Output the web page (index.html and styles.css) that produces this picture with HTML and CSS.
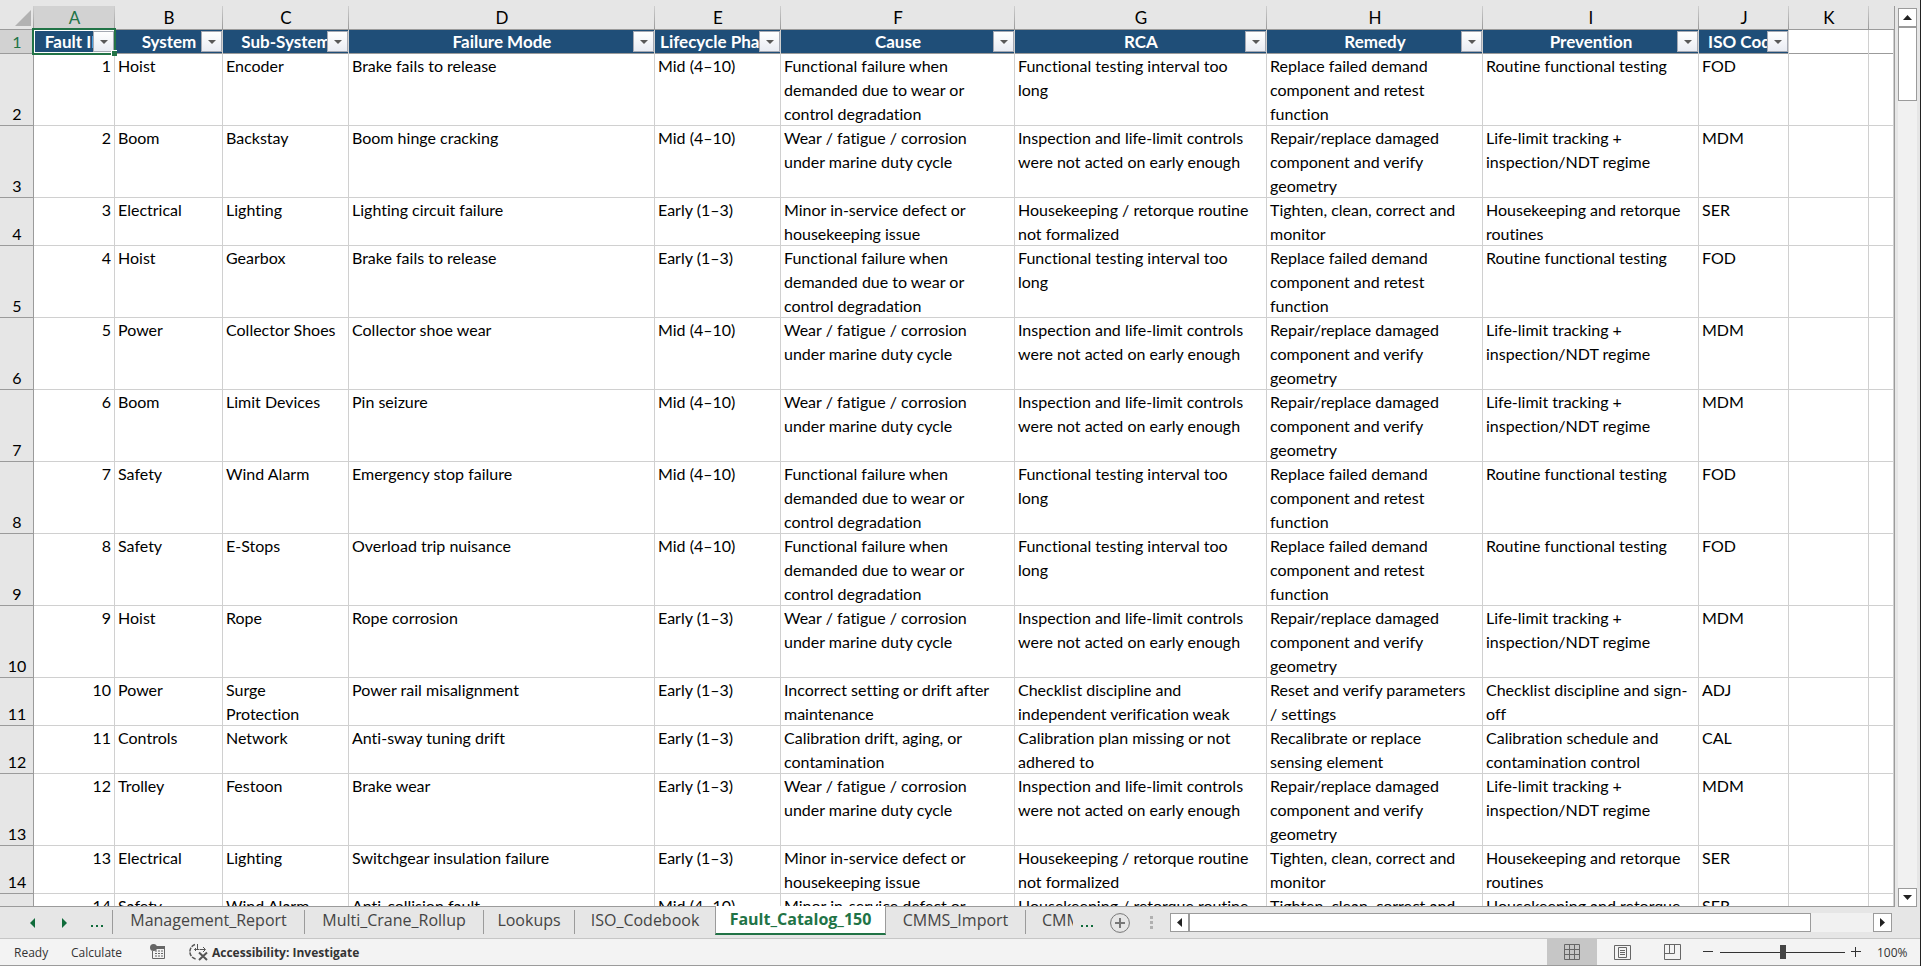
FILE: index.html
```html
<!DOCTYPE html>
<html lang="en">
<head>
<meta charset="utf-8">
<title>Fault_Catalog_150</title>
<link rel="stylesheet" href="styles.css">
</head>
<body>
<main class="work">
<div class="sheet">
<table class="grid">
<colgroup><col class="w-row"><col class="w-a"><col class="w-b"><col class="w-c"><col class="w-d"><col class="w-e"><col class="w-f"><col class="w-g"><col class="w-h"><col class="w-i"><col class="w-j"><col class="w-k"><col></colgroup>
<thead>
<tr class="letters"><th class="corner"><svg width="16" height="16" viewBox="0 0 16 16"><path d="M16 0V16H0z" fill="#b2b2b2"/></svg></th><th class="sel">A</th><th>B</th><th>C</th><th>D</th><th>E</th><th>F</th><th>G</th><th>H</th><th>I</th><th>J</th><th>K</th><th></th></tr>
<tr class="titles"><th class="num sel">1</th>
<th class="title active">Fault ID<button class="filter" aria-label="Filter Fault ID"></button><span class="handle"></span></th>
<th class="title">System<button class="filter" aria-label="Filter System"></button></th>
<th class="title">Sub-System<button class="filter" aria-label="Filter Sub-System"></button></th>
<th class="title">Failure Mode<button class="filter" aria-label="Filter Failure Mode"></button></th>
<th class="title">Lifecycle Phase<button class="filter" aria-label="Filter Lifecycle Phase"></button></th>
<th class="title">Cause<button class="filter" aria-label="Filter Cause"></button></th>
<th class="title">RCA<button class="filter" aria-label="Filter RCA"></button></th>
<th class="title">Remedy<button class="filter" aria-label="Filter Remedy"></button></th>
<th class="title">Prevention<button class="filter" aria-label="Filter Prevention"></button></th>
<th class="title">ISO Code<button class="filter" aria-label="Filter ISO Code"></button></th>
<th class="blank"></th><th class="blank"></th></tr>
</thead>
<tbody>
<tr><th class="num">2</th><td class="id">1</td><td>Hoist</td><td>Encoder</td><td>Brake fails to release</td><td>Mid (4–10)</td><td>Functional failure when demanded due to wear or control degradation</td><td>Functional testing interval too long</td><td>Replace failed demand component and retest function</td><td>Routine functional testing</td><td>FOD</td><td></td><td></td></tr>
<tr><th class="num">3</th><td class="id">2</td><td>Boom</td><td>Backstay</td><td>Boom hinge cracking</td><td>Mid (4–10)</td><td>Wear / fatigue / corrosion under marine duty cycle</td><td>Inspection and life-limit controls were not acted on early enough</td><td>Repair/replace damaged component and verify geometry</td><td>Life-limit tracking + inspection/NDT regime</td><td>MDM</td><td></td><td></td></tr>
<tr><th class="num">4</th><td class="id">3</td><td>Electrical</td><td>Lighting</td><td>Lighting circuit failure</td><td>Early (1–3)</td><td>Minor in-service defect or housekeeping issue</td><td>Housekeeping / retorque routine not formalized</td><td>Tighten, clean, correct and monitor</td><td>Housekeeping and retorque routines</td><td>SER</td><td></td><td></td></tr>
<tr><th class="num">5</th><td class="id">4</td><td>Hoist</td><td>Gearbox</td><td>Brake fails to release</td><td>Early (1–3)</td><td>Functional failure when demanded due to wear or control degradation</td><td>Functional testing interval too long</td><td>Replace failed demand component and retest function</td><td>Routine functional testing</td><td>FOD</td><td></td><td></td></tr>
<tr><th class="num">6</th><td class="id">5</td><td>Power</td><td>Collector Shoes</td><td>Collector shoe wear</td><td>Mid (4–10)</td><td>Wear / fatigue / corrosion under marine duty cycle</td><td>Inspection and life-limit controls were not acted on early enough</td><td>Repair/replace damaged component and verify geometry</td><td>Life-limit tracking + inspection/NDT regime</td><td>MDM</td><td></td><td></td></tr>
<tr><th class="num">7</th><td class="id">6</td><td>Boom</td><td>Limit Devices</td><td>Pin seizure</td><td>Mid (4–10)</td><td>Wear / fatigue / corrosion under marine duty cycle</td><td>Inspection and life-limit controls were not acted on early enough</td><td>Repair/replace damaged component and verify geometry</td><td>Life-limit tracking + inspection/NDT regime</td><td>MDM</td><td></td><td></td></tr>
<tr><th class="num">8</th><td class="id">7</td><td>Safety</td><td>Wind Alarm</td><td>Emergency stop failure</td><td>Mid (4–10)</td><td>Functional failure when demanded due to wear or control degradation</td><td>Functional testing interval too long</td><td>Replace failed demand component and retest function</td><td>Routine functional testing</td><td>FOD</td><td></td><td></td></tr>
<tr><th class="num">9</th><td class="id">8</td><td>Safety</td><td>E-Stops</td><td>Overload trip nuisance</td><td>Mid (4–10)</td><td>Functional failure when demanded due to wear or control degradation</td><td>Functional testing interval too long</td><td>Replace failed demand component and retest function</td><td>Routine functional testing</td><td>FOD</td><td></td><td></td></tr>
<tr><th class="num">10</th><td class="id">9</td><td>Hoist</td><td>Rope</td><td>Rope corrosion</td><td>Early (1–3)</td><td>Wear / fatigue / corrosion under marine duty cycle</td><td>Inspection and life-limit controls were not acted on early enough</td><td>Repair/replace damaged component and verify geometry</td><td>Life-limit tracking + inspection/NDT regime</td><td>MDM</td><td></td><td></td></tr>
<tr><th class="num">11</th><td class="id">10</td><td>Power</td><td>Surge Protection</td><td>Power rail misalignment</td><td>Early (1–3)</td><td>Incorrect setting or drift after maintenance</td><td>Checklist discipline and independent verification weak</td><td>Reset and verify parameters / settings</td><td>Checklist discipline and sign-off</td><td>ADJ</td><td></td><td></td></tr>
<tr><th class="num">12</th><td class="id">11</td><td>Controls</td><td>Network</td><td>Anti-sway tuning drift</td><td>Early (1–3)</td><td>Calibration drift, aging, or contamination</td><td>Calibration plan missing or not adhered to</td><td>Recalibrate or replace sensing element</td><td>Calibration schedule and contamination control</td><td>CAL</td><td></td><td></td></tr>
<tr><th class="num">13</th><td class="id">12</td><td>Trolley</td><td>Festoon</td><td>Brake wear</td><td>Early (1–3)</td><td>Wear / fatigue / corrosion under marine duty cycle</td><td>Inspection and life-limit controls were not acted on early enough</td><td>Repair/replace damaged component and verify geometry</td><td>Life-limit tracking + inspection/NDT regime</td><td>MDM</td><td></td><td></td></tr>
<tr><th class="num">14</th><td class="id">13</td><td>Electrical</td><td>Lighting</td><td>Switchgear insulation failure</td><td>Early (1–3)</td><td>Minor in-service defect or housekeeping issue</td><td>Housekeeping / retorque routine not formalized</td><td>Tighten, clean, correct and monitor</td><td>Housekeeping and retorque routines</td><td>SER</td><td></td><td></td></tr>
<tr><th class="num"></th><td class="id">14</td><td>Safety</td><td>Wind Alarm</td><td>Anti-collision fault</td><td>Mid (4–10)</td><td>Minor in-service defect or housekeeping issue</td><td>Housekeeping / retorque routine not formalized</td><td>Tighten, clean, correct and monitor</td><td>Housekeeping and retorque routines</td><td>SER</td><td></td><td></td></tr>
</tbody>
</table>
</div>
<div class="vscroll">
<button class="arrow" aria-label="Scroll up"><svg width="9" height="5" viewBox="0 0 9 5"><path d="M4.500 0L9 5H0z"/></svg></button>
<div class="vthumb"></div>
<div class="track"></div>
<button class="arrow" aria-label="Scroll down"><svg width="9" height="5" viewBox="0 0 9 5"><path d="M0 0H9L4.500 5z"/></svg></button>
</div>
</main>
<nav class="tabbar">
<div class="tabnav">
<button class="plain" aria-label="Previous sheet"><svg width="5" height="10" viewBox="0 0 5 10"><path d="M5 0V10L0 5z"/></svg></button>
<button class="plain" aria-label="Next sheet"><svg width="5" height="10" viewBox="0 0 5 10"><path d="M0 0L5 5L0 10z"/></svg></button>
<button class="plain dots" aria-label="Earlier sheets"><svg width="13" height="2" viewBox="0 0 13 2"><path d="M0 0h2v2H0zM5 0h2v2H5zM10 0h2v2h-2z"/></svg></button>
</div>
<button class="tab t-report">Management_Report</button>
<button class="tab t-rollup">Multi_Crane_Rollup</button>
<button class="tab t-lookups">Lookups</button>
<button class="tab t-iso">ISO_Codebook</button>
<button class="tab t-fault current">Fault_Catalog_150</button>
<button class="tab t-import">CMMS_Import</button>
<button class="tab t-cut"><span class="cut">CMMS</span></button>
<button class="plain more" aria-label="More sheets"><svg width="13" height="2" viewBox="0 0 13 2"><path d="M0 0h2v2H0zM5 0h2v2H5zM10 0h2v2h-2z"/></svg></button>
<button class="plain add" aria-label="New sheet"><svg width="20" height="20" viewBox="0 0 20 20" fill="none" stroke="#777"><circle cx="10" cy="10" r="9.400"/><path d="M10 5v10M5 10h10" stroke-width="2"/></svg></button>
<svg class="grip" width="3" height="13" viewBox="0 0 3 13"><path d="M0 0h3v3H0zM0 5h3v3H0zM0 10h3v3H0z" fill="#b0b0b0"/></svg>
<div class="hscroll">
<button class="arrow" aria-label="Scroll left"><svg width="5" height="9" viewBox="0 0 5 9"><path d="M5 0V9L0 4.500z"/></svg></button>
<div class="hthumb"></div>
<div class="track"></div>
<button class="arrow" aria-label="Scroll right"><svg width="5" height="9" viewBox="0 0 5 9"><path d="M0 0L5 4.500L0 9z"/></svg></button>
</div>
</nav>
<footer class="status">
<span class="ready">Ready</span>
<span class="calc">Calculate</span>
<button class="plain macro" aria-label="Record macro"><svg width="16" height="16" viewBox="0 0 16 16"><path d="M2.500 7V14.500H14.500V2.500H7" fill="none" stroke="#666"/><path d="M6 2H15V5H6z" fill="#666"/><circle cx="3.500" cy="3.500" r="3.500" fill="#666"/><path d="M5 7h2M8 7h2M11 7h2M5 9.500h2M8 9.500h2M11 9.500h2M5 12h2M8 12h2M11 12h2" stroke="#666"/></svg></button>
<button class="plain access"><svg width="20" height="18" viewBox="0 0 20 18" fill="none" stroke="#555"><path d="M6 1.500A7.500 7.500 0 0 0 7 16" stroke-width="1.500" stroke-dasharray="4 1"/><path d="M8.500 1v5M5.500 6.500h5M7 5l-1.500 1.500L7 8M11 6.500h5M14 4l2.500 2.500L14 9"/><path d="M10 9.500l8 7.500M18 9.500l-8 7.500" stroke-width="2"/></svg>Accessibility: Investigate</button>
<span class="space"></span>
<button class="view on" aria-label="Normal"><svg width="16" height="16" viewBox="0 0 16 16"><path d="M.5.5h15v15H.5zM5.500.5v15M10.500.5v15M.5 5.500h15M.5 10.500h15"/></svg></button>
<button class="view" aria-label="Page Layout"><svg width="17" height="15" viewBox="0 0 17 15"><path d="M.5.5h16v14H.5zM4.500 2.500h8v10h-8zM6 5.500h5M6 7.500h5M6 9.500h5"/></svg></button>
<button class="view" aria-label="Page Break Preview"><svg width="17" height="16" viewBox="0 0 17 16"><path d="M.5.5h16v15H.5zM.5 9.500h10v-9M5.500.5v9"/></svg></button>
<button class="plain zoomout" aria-label="Zoom out"><svg width="10" height="10" viewBox="0 0 10 10"><path d="M0 4.500h10" stroke="#333"/></svg></button>
<input class="zoom" type="range" min="0" max="100" value="50" aria-label="Zoom">
<button class="plain zoomin" aria-label="Zoom in"><svg width="10" height="10" viewBox="0 0 10 10"><path d="M0 4.500h10M4.500 0v10" stroke="#333"/></svg></button>
<span class="percent">100%</span>
</footer>
</body>
</html>
```

FILE: styles.css
```css
* { box-sizing: border-box; }
body {
  margin: 0;
  height: 100vh;
  display: flex;
  flex-direction: column;
  background: #e6e6e6;
  border-right: 1px solid #222;
  font-family: "Open Sans", "Noto Sans", sans-serif;
  overflow: hidden;
}
button { font: inherit; color: inherit; padding: 0; border: 0; background: none; display: flex; align-items: center; justify-content: center; }
svg { display: block; flex: none; }

.work { flex: 1; min-height: 0; display: flex; padding-top: 6px; }
.sheet { flex: 1; min-width: 0; overflow: hidden; border-right: 1px solid #9b9b9b; border-bottom: 1px solid #9b9b9b; }
.grid { width: 100%; table-layout: fixed; border-spacing: 0; font-family: Lato, sans-serif; font-size: 16px; line-height: 24px; font-variant-ligatures: none; color: #000; }
.w-row { width: 34px; }
.w-a { width: 81px; }
.w-b { width: 108px; }
.w-c, .w-e { width: 126px; }
.w-d { width: 306px; }
.w-f { width: 234px; }
.w-g { width: 252px; }
.w-h, .w-i { width: 216px; }
.w-j { width: 90px; }
.w-k { width: 80px; }
.grid th, .grid td { padding: 0; font-weight: 400; }
.grid td { padding: 0 8px 0 3px; vertical-align: top; text-align: left; background: #fff; box-shadow: inset -1px -1px #d0d0d0; }
.grid td.id { padding-right: 4px; text-align: right; }
.letters th { height: 24px; font-size: 17px; line-height: 22px; background: linear-gradient(#cfcfcf, #9b9b9b) right / 1px 100% no-repeat #e6e6e6; border-bottom: 1px solid #9b9b9b; }
.letters th:last-child { background: #e6e6e6; }
.letters .sel { background-color: #d2d2d2; color: #217346; }
.corner svg { margin: 3px 3px 3px auto; }
.grid .num { vertical-align: bottom; background: #e6e6e6; box-shadow: inset -1px -1px #9b9b9b; }
.grid .num.sel { background: #d2d2d2; color: #217346; }
.grid .title { position: relative; height: 24px; overflow: hidden; white-space: nowrap; font-size: 17px; font-weight: 700; color: #fff; background: #1f4e78; box-shadow: inset -1px 0 #d0d0d0, inset 0 -1px #9b9b9b; }
.grid .title.active { overflow: visible; z-index: 1; box-shadow: none; }
.active::after { content: ""; position: absolute; inset: -2px -1px -1px -2px; border: 2px solid #217346; box-shadow: inset 0 0 0 1px #fff; pointer-events: none; }
.active .filter { z-index: 1; }
.handle { position: absolute; right: -2px; bottom: -2px; z-index: 2; width: 6px; height: 6px; border: solid #fff; border-width: 1px 0 0 1px; background: #217346; }
.grid .blank { background: #fff; box-shadow: inset -1px 0 #d0d0d0, inset 0 -1px #9b9b9b; }
.filter { position: absolute; right: 1px; top: 1px; width: 21px; height: 21px; border: 1px solid #a5a9b3; background: linear-gradient(#fff, #e9ecf3); }
.filter::before { content: ""; border: 4px solid transparent; border-top-color: #595959; border-bottom: 0; }

.vscroll { width: 25px; padding: 2px 3px 0 3px; display: flex; flex-direction: column; }
.arrow { width: 19px; height: 19px; flex: none; border: 1px solid #9b9b9b; background: #fff; fill: #222; }
.vthumb { width: 19px; height: 74px; border: 1px solid #9b9b9b; background: #fff; }
.track { flex: 1; background: #f1f1f1; }

.tabbar { height: 32px; flex: none; display: flex; border-bottom: 1px solid #c6c6c6; font-size: 16px; color: #444; }
.tabnav { width: 112px; height: 32px; display: flex; align-items: center; gap: 27px; padding-left: 30px; fill: #0f6b3a; }
.dots svg, .more svg { margin-top: 6px; }
.dots { margin-left: -3px; }
.tab { height: 24px; margin-top: 3px; line-height: 24px; border-right: 1px solid #9b9b9b; white-space: nowrap; padding-bottom: 4px; }
.tabnav + .tab { border-left: 1px solid #9b9b9b; }
.t-report { width: 193px; }
.t-rollup { width: 179px; }
.t-lookups { width: 91px; }
.t-iso { width: 140px; border-right: 0; }
.t-fault { width: 171px; }
.t-import { width: 140px; }
.t-cut { width: 47px; border: 0; justify-content: flex-end; }
.cut { width: 31px; overflow: hidden; text-align: left; }
.current { height: 29px; margin-top: -1px; padding: 0 0 1px; border: 1px solid #9b9b9b; border-top: 0; border-bottom: 2px solid #217346; background: #fff; color: #217346; font-weight: 700; }
.more { width: 29px; height: 32px; fill: #0f6b3a; }
.add { width: 36px; height: 32px; }
.grip { margin: 9px 17px 0 12px; }
.hscroll { flex: 1; display: flex; margin: 6px 28px 0 0; height: 19px; }
.hthumb { flex: 10; border: 1px solid #9b9b9b; background: #fff; }

.status { height: 27px; flex: none; display: flex; align-items: center; background: #f3f3f3; border-bottom: 1px solid #9b9b9b; font-size: 12px; color: #333; }
.ready { width: 71px; padding-left: 14px; }
.calc { width: 79px; }
.macro { width: 16px; margin-right: 23px; }
.access { gap: 3px; font-weight: 700; }
.space { flex: 1; }
.view { width: 50px; height: 26px; fill: none; stroke: #666; }
.view.on { background: #c6c6c6; }
.zoomout { margin-left: 6px; }
.zoom { appearance: none; -webkit-appearance: none; width: 125px; height: 14px; margin: 0 6px 0 7px; background: linear-gradient(#333, #333) center / 100% 1px no-repeat; }
.zoom::-webkit-slider-thumb { -webkit-appearance: none; width: 6px; height: 14px; background: #444; }
.percent { width: 59px; padding-left: 16px; }
```
